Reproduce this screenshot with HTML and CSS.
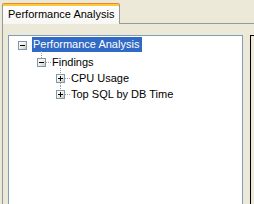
FILE: index.html
```
<!DOCTYPE html>
<html>
<head>
<meta charset="utf-8">
<link rel="stylesheet" href="styles.css">
</head>
<body>
<div class="window">
  <div class="tabrow">
    <div class="tab">Performance Analysis</div>
    <div class="tabfill"></div>
  </div>
  <div class="pane">
    <div class="tree">
      <div class="row first l0">
        <svg class="glyph" width="18" height="16" viewBox="0 0 18 16">
          <defs>
            <linearGradient id="exp" x1="0" y1="0" x2="1" y2="1">
              <stop offset="0" stop-color="#ffffff"/>
              <stop offset="0.5" stop-color="#f1efe6"/>
              <stop offset="1" stop-color="#c7c2ae"/>
            </linearGradient>
          </defs>
          <rect class="box" x="4.5" y="4.5" width="8" height="8"/>
          <path class="sign" d="M6 8.5h5"/>
        </svg>
        <span class="label sel">Performance Analysis</span>
      </div>
      <div class="row l1">
        <svg class="glyph" width="18" height="16" viewBox="0 0 18 16">
          <line class="dots" x1="8.5" y1="-3" x2="8.5" y2="4"/>
          <line class="dots" x1="13" y1="8.5" x2="18" y2="8.5"/>
          <rect class="box" x="4.5" y="4.5" width="8" height="8"/>
          <path class="sign" d="M6 8.5h5"/>
        </svg>
        <span class="label">Findings</span>
      </div>
      <div class="row l2">
        <svg class="glyph" width="18" height="16" viewBox="0 0 18 16">
          <line class="dots" x1="8.5" y1="-2" x2="8.5" y2="4"/>
          <line class="dots" x1="8.5" y1="13" x2="8.5" y2="16"/>
          <line class="dots" x1="13" y1="8.5" x2="18" y2="8.5"/>
          <rect class="box" x="4.5" y="4.5" width="8" height="8"/>
          <path class="sign" d="M6 8.5h5M8.5 6v5"/>
        </svg>
        <span class="label">CPU Usage</span>
      </div>
      <div class="row l2">
        <svg class="glyph" width="18" height="16" viewBox="0 0 18 16">
          <line class="dots" x1="8.5" y1="0" x2="8.5" y2="4"/>
          <line class="dots" x1="13" y1="8.5" x2="18" y2="8.5"/>
          <rect class="box" x="4.5" y="4.5" width="8" height="8"/>
          <path class="sign" d="M6 8.5h5M8.5 6v5"/>
        </svg>
        <span class="label">Top SQL by DB Time</span>
      </div>
    </div>
    <div class="side"></div>
  </div>
</div>
</body>
</html>
```

FILE: styles.css
```
html, body {
  margin: 0;
  padding: 0;
}
body {
  width: 254px;
  height: 204px;
  overflow: hidden;
  background: #ece9d8;
  font-family: "Liberation Sans", Arial, sans-serif;
  font-size: 11px;
  color: #000;
}
.window {
  display: flex;
  flex-direction: column;
  height: 204px;
}
.tabrow {
  display: flex;
  align-items: flex-end;
  height: 24px;
  padding-left: 2px;
  flex: none;
}
.tab {
  box-sizing: border-box;
  width: 118px;
  height: 21px;
  border: 1px solid #919b9c;
  border-top: 1px solid #e68b2c;
  border-bottom: none;
  border-radius: 2px 2px 0 0;
  box-shadow: inset 0 2px 0 #ffc83c;
  background: linear-gradient(#ffffff, #f6f6f2);
  padding: 4px 0 0 5px;
  line-height: 13px;
  white-space: nowrap;
}
.tabfill {
  flex: 1;
  border-bottom: 1px solid #919b9c;
}
.pane {
  flex: 1;
  display: flex;
  margin-left: 2px;
  border-left: 1px solid #919b9c;
  padding: 11px 0 0 5px;
  gap: 7px;
}
.tree {
  box-sizing: border-box;
  width: 235px;
  border: 1px solid #7f9db9;
  border-bottom: none;
  background: #ffffff;
  padding-top: 1px;
}
.side {
  flex: 1;
  border-top: 1px solid #000;
  border-left: 1px solid #000;
}
.row {
  display: flex;
  align-items: flex-start;
  height: 16px;
}
.row.first {
  height: 17px;
}
.l0 { padding-left: 5px; }
.l1 { padding-left: 24px; }
.l2 { padding-left: 43px; }
.glyph {
  display: block;
  flex: none;
  overflow: visible;
  shape-rendering: crispEdges;
}
.dots {
  stroke: #a0a0a0;
  stroke-width: 1;
  stroke-dasharray: 1 1;
}
.box {
  fill: url(#exp);
  stroke: #7b98b5;
  stroke-width: 1;
}
.sign {
  stroke: #000;
  stroke-width: 1;
  fill: none;
}
.label {
  margin-top: 1px;
  height: 14px;
  line-height: 14px;
  padding: 0 3px 0 1px;
  white-space: nowrap;
}
.row.first .label {
  margin-top: 0;
  height: 15px;
  line-height: 15px;
}
.label.sel {
  background: #316ac5;
  color: #fff;
}
```
